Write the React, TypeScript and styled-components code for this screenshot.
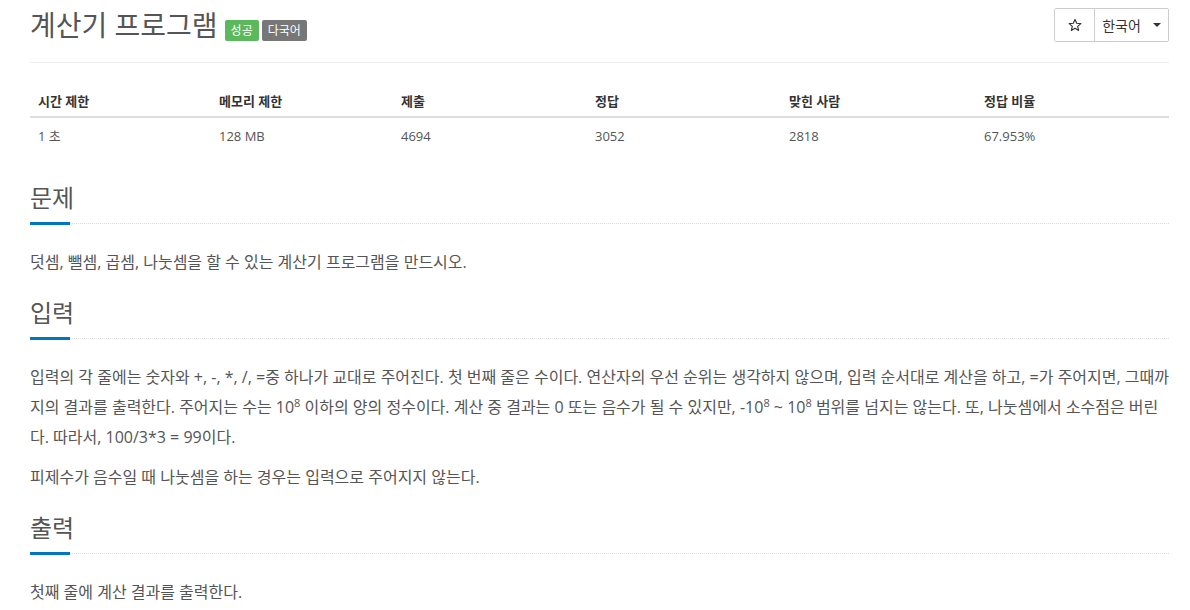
import React from "react";
import styled, { createGlobalStyle } from "styled-components";

const Global = createGlobalStyle`
  html, body { margin: 0; padding: 0; background: #fff; }
  body {
    font-family: "Open Sans", "Noto Sans CJK KR", sans-serif;
    color: #555;
    font-size: 14px;
  }
  * { box-sizing: border-box; }
`;

const Page = styled.div`
  padding: 0 21px 0 30px;
`;

const Header = styled.div`
  display: flex;
  align-items: flex-start;
  justify-content: space-between;
  padding-top: 8px;
  padding-bottom: 20px;
  border-bottom: 1px solid #eee;
`;

const TitleRow = styled.div`
  display: flex;
  align-items: flex-start;
  gap: 3px;
`;

const Title = styled.h1`
  margin: 0 4px 0 0;
  font-size: 28px;
  font-weight: 400;
  line-height: 34px;
  color: #555;
`;

const Label = styled.span<{ $bg: string }>`
  display: inline-block;
  background: ${(p) => p.$bg};
  color: #fff;
  font-size: 12px;
  line-height: 21px;
  height: 21px;
  padding: 0 6px;
  border-radius: 2px;
  margin-top: 12px;
`;

const BtnGroup = styled.div`
  display: flex;
  border: 1px solid #ccc;
  border-radius: 2px;
  height: 34px;
`;

const Btn = styled.button<{ $w: number }>`
  width: ${(p) => p.$w}px;
  background: #fff;
  border: none;
  font-family: inherit;
  font-size: 14px;
  color: #333;
  display: flex;
  align-items: center;
  justify-content: center;
  gap: 12px;
  padding: 0;
  & + & { border-left: 1px solid #ccc; }
`;

const Caret = styled.span`
  width: 0;
  height: 0;
  border-left: 4px solid transparent;
  border-right: 4px solid transparent;
  border-top: 4px solid #333;
`;

const Table = styled.div`
  margin: 20px 0 28px;
  display: grid;
  grid-template-columns: 181px 182px 194px 194px 195px 1fr;
`;

const Th = styled.div`
  font-weight: 700;
  color: #333;
  font-size: 13px;
  padding: 8px 8px 5px;
  line-height: 20px;
  border-bottom: 2px solid #ddd;
`;

const Td = styled.div`
  font-size: 13px;
  color: #555;
  padding: 8px;
  line-height: 21px;
`;

const Section = styled.section`
  margin-top: 21px;
`;

const Heading = styled.div`
  border-bottom: 1px dotted #ddd;
  padding-bottom: 10px;
  margin-bottom: 23px;
`;

const HeadingText = styled.h2`
  margin: 0;
  font-size: 24px;
  font-weight: 400;
  line-height: 30px;
  color: #555;
  display: inline-block;
  position: relative;
  &::after {
    content: "";
    position: absolute;
    left: 0;
    bottom: -12px;
    width: 40px;
    height: 3px;
    background: #0076c0;
  }
`;

const P = styled.p`
  margin: 0 0 10px;
  font-size: 16px;
  line-height: 30px;
  color: #555;
`;

const Sup = styled.sup`
  font-size: 11px;
  line-height: 0;
  vertical-align: 6px;
`;

const StarIcon = () => (
  <svg width="14" height="14" viewBox="0 0 24 24" fill="none" stroke="#333" strokeWidth="2" strokeLinejoin="round">
    <polygon points="12,2.5 14.9,9 22,9.6 16.6,14.3 18.2,21.3 12,17.6 5.8,21.3 7.4,14.3 2,9.6 9.1,9" />
  </svg>
);

const stats = [
  ["시간 제한", "1 초"],
  ["메모리 제한", "128 MB"],
  ["제출", "4694"],
  ["정답", "3052"],
  ["맞힌 사람", "2818"],
  ["정답 비율", "67.953%"],
];

export default function App() {
  return (
    <Page>
      <Global />
      <Header>
        <TitleRow>
          <Title>계산기 프로그램</Title>
          <Label $bg="#5cb85c">성공</Label>
          <Label $bg="#777">다국어</Label>
        </TitleRow>
        <BtnGroup>
          <Btn $w={39}><StarIcon /></Btn>
          <Btn $w={74}>한국어 <Caret /></Btn>
        </BtnGroup>
      </Header>
      <Table>
        {stats.map(([h]) => <Th key={h}>{h}</Th>)}
        {stats.map(([h, v]) => <Td key={h}>{v}</Td>)}
      </Table>
      <Section>
        <Heading><HeadingText>문제</HeadingText></Heading>
        <P>덧셈, 뺄셈, 곱셈, 나눗셈을 할 수 있는 계산기 프로그램을 만드시오.</P>
      </Section>
      <Section>
        <Heading><HeadingText>입력</HeadingText></Heading>
        <P>
          입력의 각 줄에는 숫자와 +, -, *, /, =중 하나가 교대로 주어진다. 첫 번째 줄은 수이다. 연산자의 우선 순위는 생각하지 않으며, 입력 순서대로 계산을 하고, =가 주어지면, 그때까지의 결과를 출력한다. 주어지는 수는 10<Sup>8</Sup> 이하의 양의 정수이다. 계산 중 결과는 0 또는 음수가 될 수 있지만, -10<Sup>8</Sup> ~ 10<Sup>8</Sup> 범위를 넘지는 않는다. 또, 나눗셈에서 소수점은 버린다. 따라서, 100/3*3 = 99이다.
        </P>
        <P>피제수가 음수일 때 나눗셈을 하는 경우는 입력으로 주어지지 않는다.</P>
      </Section>
      <Section>
        <Heading><HeadingText>출력</HeadingText></Heading>
        <P>첫째 줄에 계산 결과를 출력한다.</P>
      </Section>
    </Page>
  );
}
